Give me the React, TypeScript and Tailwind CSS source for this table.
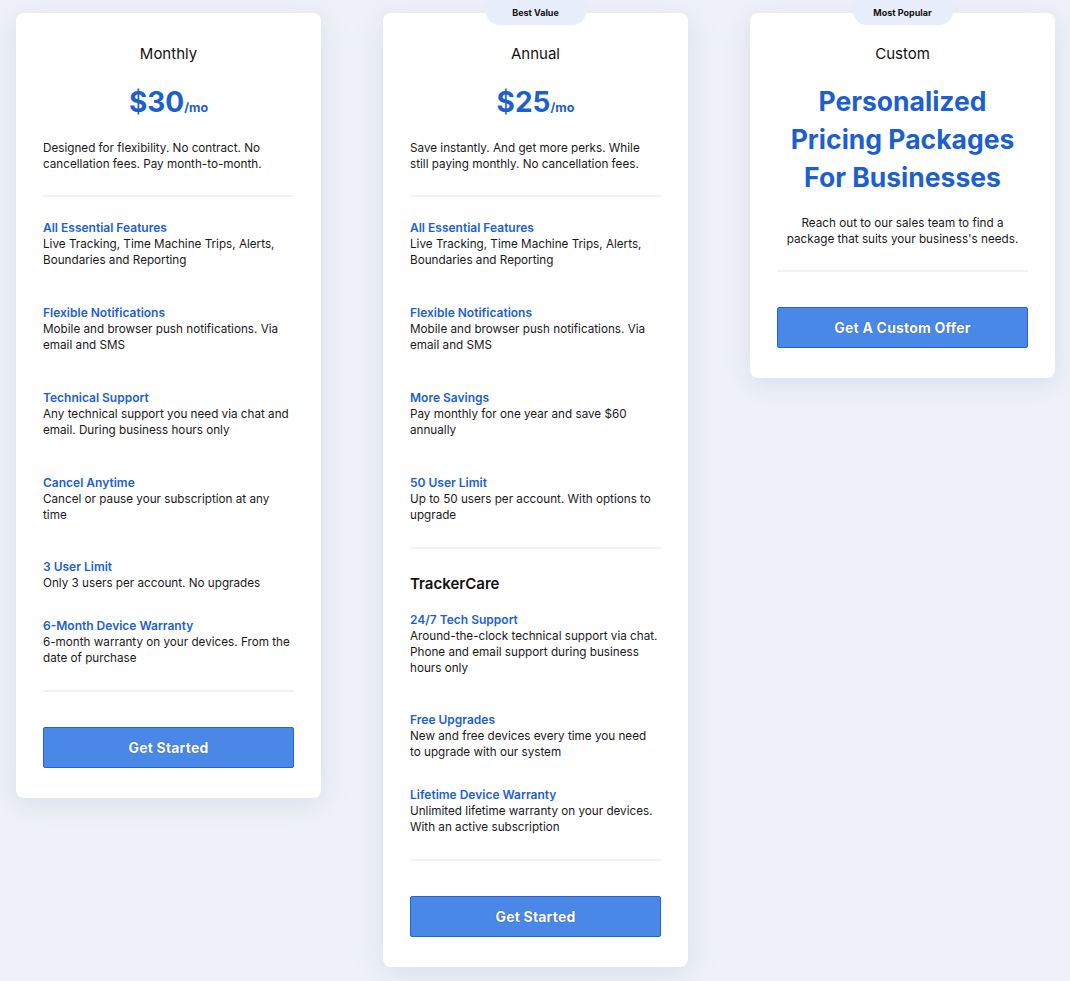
interface Feature {
  title: string;
  lines: string[];
  gap: string;
}

interface Plan {
  name: string;
  price: string;
  badge?: string;
  blurb: string[];
  features: Feature[];
  care?: Feature[];
}

const plans: Plan[] = [
  {
    name: "Monthly",
    price: "$30",
    blurb: ["Designed for flexibility. No contract. No", "cancellation fees. Pay month-to-month."],
    features: [
      { title: "All Essential Features", lines: ["Live Tracking, Time Machine Trips, Alerts,", "Boundaries and Reporting"], gap: "mb-[37px]" },
      { title: "Flexible Notifications", lines: ["Mobile and browser push notifications. Via", "email and SMS"], gap: "mb-[37px]" },
      { title: "Technical Support", lines: ["Any technical support you need via chat and", "email. During business hours only"], gap: "mb-[37px]" },
      { title: "Cancel Anytime", lines: ["Cancel or pause your subscription at any", "time"], gap: "mb-[36px]" },
      { title: "3 User Limit", lines: ["Only 3 users per account. No upgrades"], gap: "mb-[27px]" },
      { title: "6-Month Device Warranty", lines: ["6-month warranty on your devices. From the", "date of purchase"], gap: "mb-0" },
    ],
  },
  {
    name: "Annual",
    price: "$25",
    badge: "Best Value",
    blurb: ["Save instantly. And get more perks. While", "still paying monthly. No cancellation fees."],
    features: [
      { title: "All Essential Features", lines: ["Live Tracking, Time Machine Trips, Alerts,", "Boundaries and Reporting"], gap: "mb-[37px]" },
      { title: "Flexible Notifications", lines: ["Mobile and browser push notifications. Via", "email and SMS"], gap: "mb-[37px]" },
      { title: "More Savings", lines: ["Pay monthly for one year and save $60", "annually"], gap: "mb-[37px]" },
      { title: "50 User Limit", lines: ["Up to 50 users per account. With options to", "upgrade"], gap: "mb-0" },
    ],
    care: [
      { title: "24/7 Tech Support", lines: ["Around-the-clock technical support via chat.", "Phone and email support during business", "hours only"], gap: "mb-[36px]" },
      { title: "Free Upgrades", lines: ["New and free devices every time you need", "to upgrade with our system"], gap: "mb-[27px]" },
      { title: "Lifetime Device Warranty", lines: ["Unlimited lifetime warranty on your devices.", "With an active subscription"], gap: "mb-0" },
    ],
  },
];

function Badge({ label }: { label: string }) {
  return (
    <div className="absolute left-1/2 -translate-x-1/2 -top-[13px] w-[100px] h-[25px] rounded-b-[14px] rounded-t-[4px] bg-[#e7edfb] flex items-center justify-center text-[9px] font-bold text-[#111]">
      {label}
    </div>
  );
}

function FeatureList({ items }: { items: Feature[] }) {
  return (
    <div>
      {items.map((f) => (
        <div key={f.title} className={f.gap}>
          <div className="text-[12px] leading-4 font-semibold text-[#1d5fcf] whitespace-nowrap">{f.title}</div>
          {f.lines.map((l) => (
            <div key={l} className="text-[11.7px] leading-4 text-[#1a1a1a] whitespace-nowrap">{l}</div>
          ))}
        </div>
      ))}
    </div>
  );
}

function Divider({ className }: { className: string }) {
  return <div className={`h-[2px] bg-[#f1f2f5] ${className}`}></div>;
}

function CtaButton({ label }: { label: string }) {
  return (
    <button className="w-full h-[41px] rounded-[2px] bg-[#4a88e8] border border-[#2563d4] text-white font-bold text-[14px] tracking-[0.2px] [text-shadow:0_0_1px_rgba(0,0,0,0.45)]">
      {label}
    </button>
  );
}

function PlanCard({ plan }: { plan: Plan }) {
  return (
    <div className="relative w-[305px] shrink-0 bg-white rounded-[8px] shadow-[0_6px_24px_rgba(180,190,215,0.35)] px-[27px] pt-[29px] pb-[30px]">
      {plan.badge && <Badge label={plan.badge} />}
      <div className="text-center text-[15px] leading-6 text-[#111]">{plan.name}</div>
      <div className="mt-[17px] flex items-baseline justify-center text-[#1d5fcf] font-bold">
        <span className="text-[28px] leading-[38px]">{plan.price}</span>
        <span className="text-[12.5px]">/mo</span>
      </div>
      <div className="mt-[19px]">
        {plan.blurb.map((l) => (
          <div key={l} className="text-[11.7px] leading-4 text-[#1a1a1a] whitespace-nowrap">{l}</div>
        ))}
      </div>
      <Divider className="mt-[23px] mb-[23px]" />
      <FeatureList items={plan.features} />
      {plan.care && (
        <>
          <Divider className="mt-[24px] mb-[24px]" />
          <div className="text-[15px] leading-[22px] font-semibold text-[#111] mb-[17px]">TrackerCare</div>
          <FeatureList items={plan.care} />
        </>
      )}
      <Divider className="mt-[24px] mb-[35px]" />
      <CtaButton label="Get Started" />
    </div>
  );
}

function CustomCard() {
  return (
    <div className="relative w-[305px] shrink-0 bg-white rounded-[8px] shadow-[0_6px_24px_rgba(180,190,215,0.35)] px-[27px] pt-[29px] pb-[30px]">
      <Badge label="Most Popular" />
      <div className="text-center text-[15px] leading-6 text-[#111]">Custom</div>
      <div className="mt-[16px] text-center text-[26.5px] leading-[38px] font-bold text-[#1d5fcf]">
        <div>Personalized</div>
        <div>Pricing Packages</div>
        <div>For Businesses</div>
      </div>
      <div className="mt-[19px] text-center">
        <div className="text-[11.7px] leading-4 text-[#1a1a1a]">Reach out to our sales team to find a</div>
        <div className="text-[11.7px] leading-4 text-[#1a1a1a]">package that suits your business's needs.</div>
      </div>
      <Divider className="mt-[23px] mb-[35px]" />
      <CtaButton label="Get A Custom Offer" />
    </div>
  );
}

export default function App() {
  return (
    <div className="min-h-[981px] w-[1070px] bg-[#eef1f8] font-['Inter',sans-serif] overflow-hidden">
      <div className="flex items-start gap-[62px] pl-[16px] pt-[13px]">
        <PlanCard plan={plans[0]} />
        <PlanCard plan={plans[1]} />
        <CustomCard />
      </div>
    </div>
  );
}
